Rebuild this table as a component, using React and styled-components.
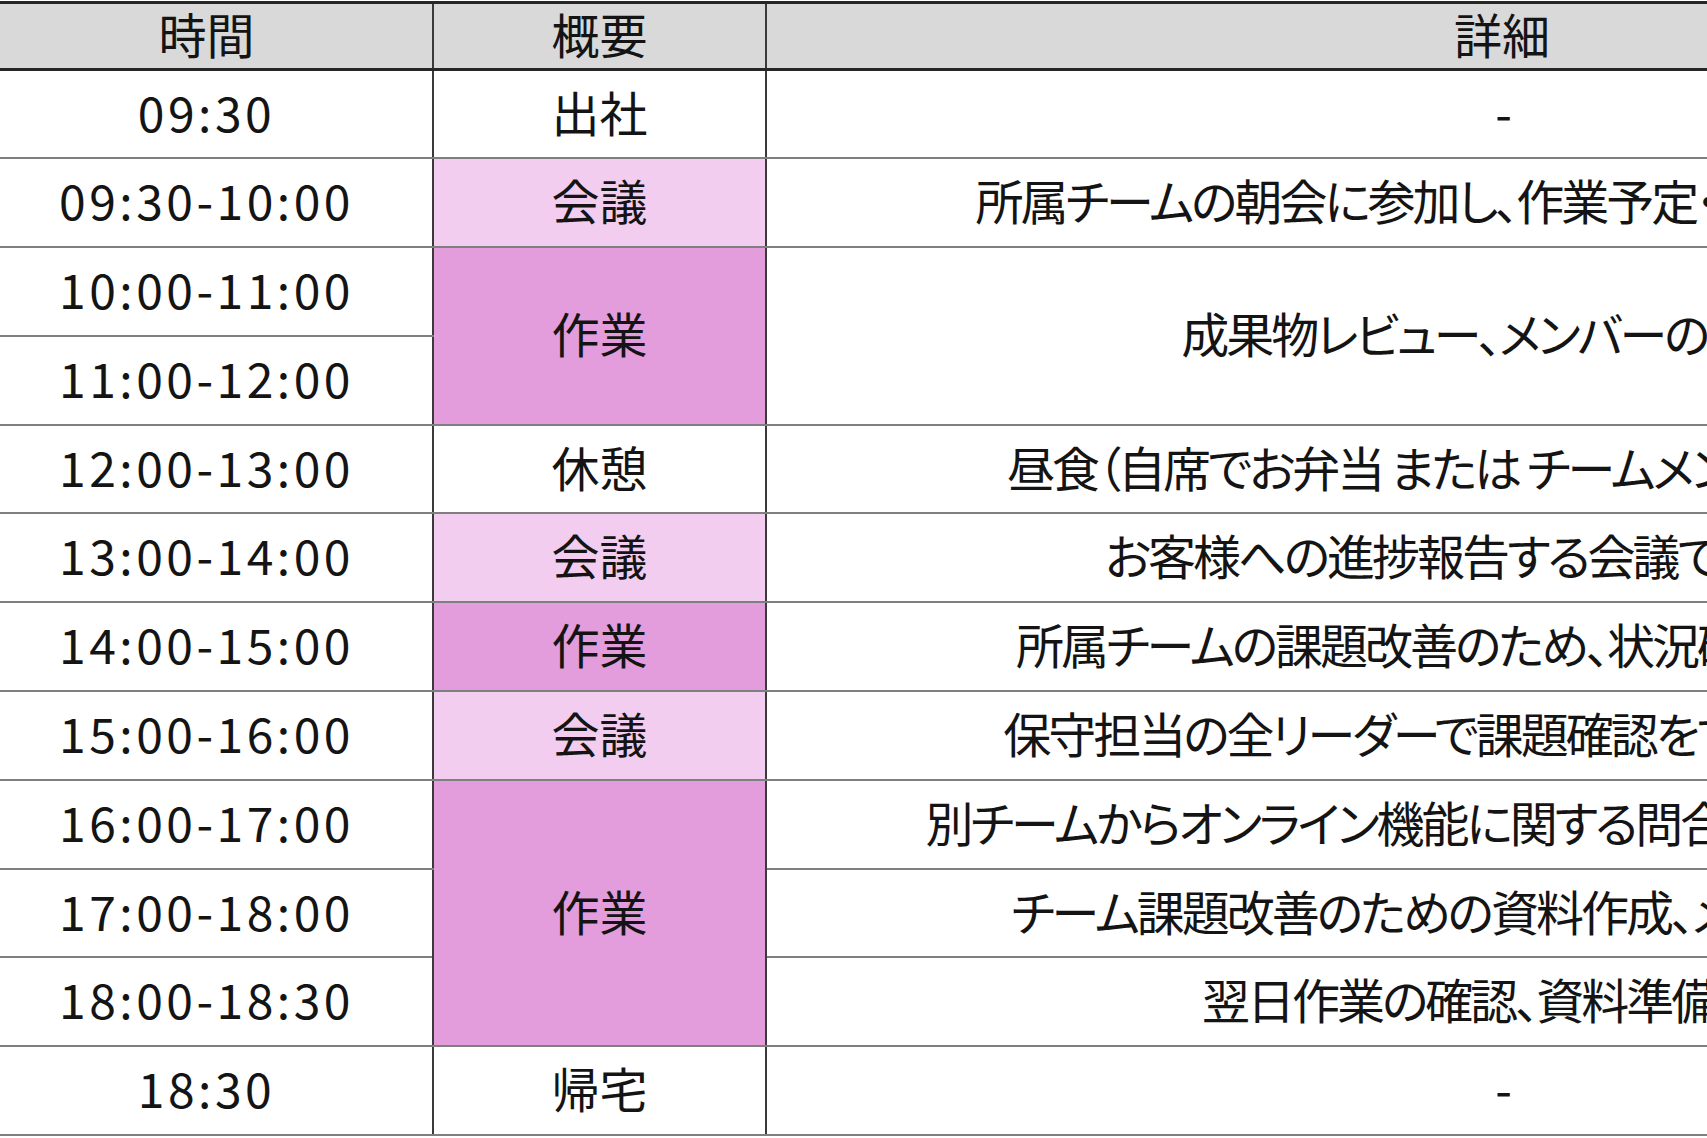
import styled, { createGlobalStyle } from "styled-components";

const GlobalStyle = createGlobalStyle`
  html, body {
    margin: 0;
    padding: 0;
    background: #ffffff;
  }
  body {
    font-family: "Noto Sans CJK JP", "Noto Sans", sans-serif;
    color: #141414;
    overflow: hidden;
  }
`;

const schedule = [
  { time: "09:30", kind: "出社", tone: "plain", detail: "-" },
  {
    time: "09:30-10:00",
    kind: "会議",
    tone: "meeting",
    detail: "所属チームの朝会に参加し、作業予定・進捗状況を共有",
  },
  {
    time: "10:00-11:00",
    kind: "作業",
    tone: "work",
    span: 2,
    detail: "成果物レビュー、メンバーのフォロ",
    detailSpan: 2,
  },
  { time: "11:00-12:00" },
  {
    time: "12:00-13:00",
    kind: "休憩",
    tone: "plain",
    detail: "昼食（自席でお弁当 または チームメンバーとランチ）",
  },
  {
    time: "13:00-14:00",
    kind: "会議",
    tone: "meeting",
    detail: "お客様への進捗報告する会議で司会担当",
  },
  {
    time: "14:00-15:00",
    kind: "作業",
    tone: "work",
    detail: "所属チームの課題改善のため、状況確認・分析実施",
  },
  {
    time: "15:00-16:00",
    kind: "会議",
    tone: "meeting",
    detail: "保守担当の全リーダーで課題確認をする会議に参加",
  },
  {
    time: "16:00-17:00",
    kind: "作業",
    tone: "work",
    span: 3,
    detail: "別チームからオンライン機能に関する問合せを受け調査回答",
  },
  {
    time: "17:00-18:00",
    detail: "チーム課題改善のための資料作成、メンバーへ共有",
  },
  { time: "18:00-18:30", detail: "翌日作業の確認、資料準備など" },
  { time: "18:30", kind: "帰宅", tone: "plain", detail: "-" },
];

const tones = {
  plain: "#ffffff",
  meeting: "#f2cdef",
  work: "#e39ddc",
};

function App() {
  return (
    <>
      <GlobalStyle />
      <Viewport>
        <ScheduleTable>
          <colgroup>
            <col style={{ width: 453 }} />
            <col style={{ width: 333 }} />
            <col style={{ width: 1472 }} />
          </colgroup>
          <thead>
            <HeadRow>
              <HeadCell>時間</HeadCell>
              <HeadCell>概要</HeadCell>
              <HeadCell>詳細</HeadCell>
            </HeadRow>
          </thead>
          <tbody>
            {schedule.map((row) => (
              <BodyRow key={row.time + (row.kind || "")}>
                <TimeCell>{row.time}</TimeCell>
                {row.kind && (
                  <KindCell rowSpan={row.span || 1} $tone={row.tone}>
                    {row.kind}
                  </KindCell>
                )}
                {row.detail && (
                  <DetailCell rowSpan={row.detailSpan || 1}>
                    {row.detail}
                  </DetailCell>
                )}
              </BodyRow>
            ))}
          </tbody>
        </ScheduleTable>
      </Viewport>
    </>
  );
}

export default App;

const Viewport = styled.div`
  width: 100vw;
  height: 100vh;
  overflow: hidden;
  padding-top: 1px;
  box-sizing: border-box;
`;

const ScheduleTable = styled.table`
  margin-left: -21px;
  width: 2258px;
  table-layout: fixed;
  border-collapse: collapse;
  font-size: 48px;
  line-height: 1;
`;

const HeadRow = styled.tr`
  height: 67px;
  background: #d9d9d9;
`;

const HeadCell = styled.th`
  font-weight: 400;
  text-align: center;
  vertical-align: middle;
  padding: 0 0 7px;
  border-top: 3px solid #262626;
  border-bottom: 3px solid #262626;
  border-left: 2px solid #3a3a3a;
  border-right: 2px solid #3a3a3a;
`;

const BodyRow = styled.tr`
  height: 88.8px;
`;

const Cell = styled.td`
  text-align: center;
  vertical-align: middle;
  padding: 0 0 7px;
  white-space: nowrap;
  border-bottom: 2px solid #7f7f7f;
  border-left: 2px solid #3a3a3a;
  border-right: 2px solid #3a3a3a;
`;

const TimeCell = styled(Cell)`
  letter-spacing: 3.5px;
`;

const KindCell = styled(Cell)`
  background: ${(p) => tones[p.$tone] || "#ffffff"};
`;

const DetailCell = styled(Cell)`
  font-feature-settings: "palt";
  letter-spacing: -3px;
`;
